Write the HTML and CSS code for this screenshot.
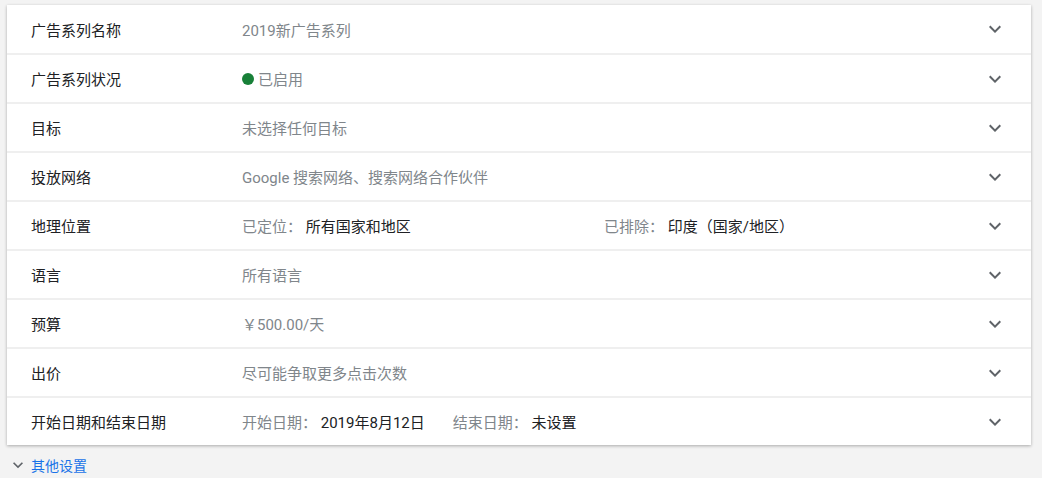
FILE: index.html
```html
<!DOCTYPE html>
<html lang="zh-CN">
<head>
    <meta charset="UTF-8">
    <title>广告系列设置</title>
    <link rel="stylesheet" href="styles.css">
</head>
<body>
    <div class="settings-card">
        <div class="setting-row">
            <div class="setting-label">广告系列名称</div>
            <div class="setting-value">2019新广告系列</div>
            <svg class="chevron" viewBox="0 0 24 24"><path d="M7.4 8.6L12 13.2l4.6-4.6L18 10l-6 6-6-6z"/></svg>
        </div>
        <div class="setting-row">
            <div class="setting-label">广告系列状况</div>
            <div class="setting-value"><span class="status-dot"></span>已启用</div>
            <svg class="chevron" viewBox="0 0 24 24"><path d="M7.4 8.6L12 13.2l4.6-4.6L18 10l-6 6-6-6z"/></svg>
        </div>
        <div class="setting-row">
            <div class="setting-label">目标</div>
            <div class="setting-value">未选择任何目标</div>
            <svg class="chevron" viewBox="0 0 24 24"><path d="M7.4 8.6L12 13.2l4.6-4.6L18 10l-6 6-6-6z"/></svg>
        </div>
        <div class="setting-row">
            <div class="setting-label">投放网络</div>
            <div class="setting-value">Google 搜索网络、搜索网络合作伙伴</div>
            <svg class="chevron" viewBox="0 0 24 24"><path d="M7.4 8.6L12 13.2l4.6-4.6L18 10l-6 6-6-6z"/></svg>
        </div>
        <div class="setting-row">
            <div class="setting-label">地理位置</div>
            <div class="setting-value split">
                <div class="split-col">已定位： <span class="strong">所有国家和地区</span></div>
                <div class="split-col">已排除： <span class="strong">印度（国家/地区）</span></div>
            </div>
            <svg class="chevron" viewBox="0 0 24 24"><path d="M7.4 8.6L12 13.2l4.6-4.6L18 10l-6 6-6-6z"/></svg>
        </div>
        <div class="setting-row">
            <div class="setting-label">语言</div>
            <div class="setting-value">所有语言</div>
            <svg class="chevron" viewBox="0 0 24 24"><path d="M7.4 8.6L12 13.2l4.6-4.6L18 10l-6 6-6-6z"/></svg>
        </div>
        <div class="setting-row">
            <div class="setting-label">预算</div>
            <div class="setting-value">￥500.00/天</div>
            <svg class="chevron" viewBox="0 0 24 24"><path d="M7.4 8.6L12 13.2l4.6-4.6L18 10l-6 6-6-6z"/></svg>
        </div>
        <div class="setting-row">
            <div class="setting-label">出价</div>
            <div class="setting-value">尽可能争取更多点击次数</div>
            <svg class="chevron" viewBox="0 0 24 24"><path d="M7.4 8.6L12 13.2l4.6-4.6L18 10l-6 6-6-6z"/></svg>
        </div>
        <div class="setting-row">
            <div class="setting-label">开始日期和结束日期</div>
            <div class="setting-value">
                <span class="date-part">开始日期： <span class="strong">2019年8月12日</span></span>
                <span class="date-part">结束日期： <span class="strong">未设置</span></span>
            </div>
            <svg class="chevron" viewBox="0 0 24 24"><path d="M7.4 8.6L12 13.2l4.6-4.6L18 10l-6 6-6-6z"/></svg>
        </div>
    </div>

    <div class="more-settings">
        <svg class="chevron small" viewBox="0 0 24 24"><path d="M7.4 8.6L12 13.2l4.6-4.6L18 10l-6 6-6-6z"/></svg>
        <a href="#" class="more-link">其他设置</a>
    </div>
</body>
</html>
```

FILE: styles.css
```css
body {
    margin: 0;
    background: #f3f3f3;
    font-family: Roboto, "Noto Sans CJK SC", sans-serif;
    font-size: 15px;
    color: #202124;
}
.settings-card {
    margin: 5px 11px 0 7px;
    background: #fff;
    box-shadow: 0 1px 3px rgba(0, 0, 0, 0.3);
}
.setting-row {
    display: flex;
    align-items: center;
    height: 47px;
    padding: 0 24px;
    border-top: 2px solid #efefef;
}
.setting-row:first-child { border-top: none; height: 48px; }
.setting-label { width: 211px; flex-shrink: 0; }
.setting-value {
    flex: 1;
    display: flex;
    align-items: center;
    color: #80868b;
}
.split-col { width: 362px; }
.date-part { margin-right: 28px; }
.strong { color: #202124; }
.status-dot {
    width: 12px;
    height: 12px;
    border-radius: 50%;
    background: #188038;
    margin-right: 4px;
}
.chevron {
    width: 24px;
    height: 24px;
    fill: #5f6368;
    flex-shrink: 0;
}
.more-settings {
    display: flex;
    align-items: center;
    padding: 10px 0 0 8px;
    font-size: 14px;
}
.chevron.small { width: 20px; height: 20px; margin-right: 3px; }
.more-link { color: #1a73e8; text-decoration: none; }
```
